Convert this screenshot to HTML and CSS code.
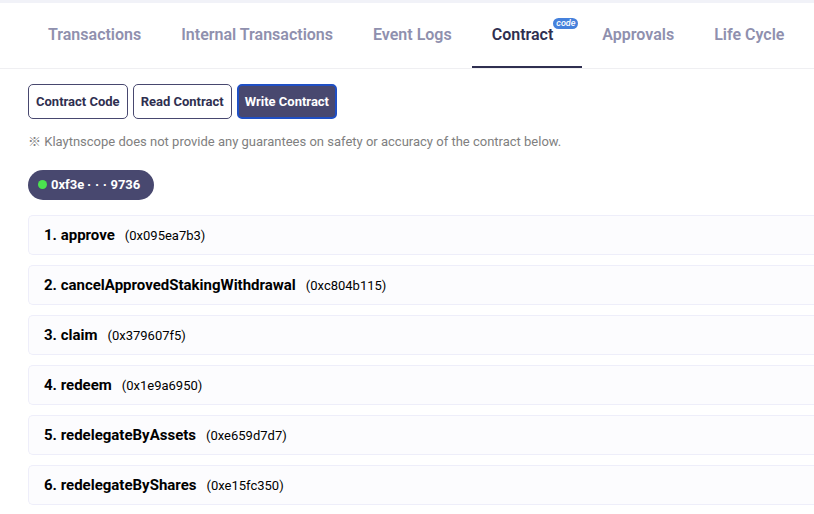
FILE: index.html
```html
<!DOCTYPE html>
<html lang="en">
<head>
<meta charset="utf-8">
<meta name="viewport" content="width=device-width, initial-scale=1">
<title>Contract</title>
<link rel="stylesheet" href="styles.css">
</head>
<body>
<nav class="tabs" aria-label="Account sections">
  <a class="tab" href="#transactions">Transactions</a>
  <a class="tab" href="#internal">Internal Transactions</a>
  <a class="tab" href="#events">Event Logs</a>
  <a class="tab tab-active" href="#contract" aria-current="page"><span class="tab-label">Contract<span class="badge">code</span></span></a>
  <a class="tab" href="#approvals">Approvals</a>
  <a class="tab" href="#life">Life Cycle</a>
</nav>
<main class="content">
  <div class="modes">
    <button class="mode" type="button">Contract Code</button>
    <button class="mode" type="button">Read Contract</button>
    <button class="mode mode-active" type="button">Write Contract</button>
  </div>
  <p class="notice">※ Klaytnscope does not provide any guarantees on safety or accuracy of the contract below.</p>
  <button class="wallet" type="button"><span class="dot"></span><span class="address">0xf3e<span class="ellipsis">· · ·</span>9736</span></button>
  <ol class="methods">
    <li class="method"><span class="name">1. approve</span><span class="selector">(0x095ea7b3)</span></li>
    <li class="method"><span class="name">2. cancelApprovedStakingWithdrawal</span><span class="selector">(0xc804b115)</span></li>
    <li class="method"><span class="name">3. claim</span><span class="selector">(0x379607f5)</span></li>
    <li class="method"><span class="name">4. redeem</span><span class="selector">(0x1e9a6950)</span></li>
    <li class="method"><span class="name">5. redelegateByAssets</span><span class="selector">(0xe659d7d7)</span></li>
    <li class="method"><span class="name">6. redelegateByShares</span><span class="selector">(0xe15fc350)</span></li>
  </ol>
</main>
</body>
</html>
```
FILE: styles.css
```css
* {
  box-sizing: border-box;
}

body {
  margin: 0;
  border-top: 3px solid #f1f2f8;
  background: #fff;
  color: #000;
  font-family: Roboto, "Noto Sans CJK JP", sans-serif;
  font-size: 13px;
}

.tabs {
  display: flex;
  height: 66px;
  padding-left: 28px;
  border-bottom: 1px solid #efeff2;
  white-space: nowrap;
}

.tab {
  display: flex;
  align-items: center;
  padding: 0 20px 1px;
  color: #8f90ae;
  font-size: 16px;
  font-weight: 600;
  line-height: 20px;
  text-decoration: none;
}

.tab-active {
  padding: 0 29px 0 20px;
  border-bottom: 2px solid #2f2f50;
  color: #2f2f50;
}

.tab-label {
  position: relative;
}

.badge {
  position: absolute;
  left: 100%;
  top: -7px;
  padding: 0 3px;
  border-radius: 6px;
  background: #4581dc;
  color: #fff;
  font-size: 9px;
  font-style: italic;
  font-weight: 500;
  line-height: 11px;
}

.content {
  padding: 15px 0 9px 28px;
  overflow: hidden;
}

.modes {
  display: flex;
  gap: 5px;
}

.mode {
  height: 35px;
  padding: 0 7px;
  border: 1px solid #48486f;
  border-radius: 5px;
  background: #fff;
  color: #2f2f50;
  font: inherit;
  font-weight: 700;
}

.mode-active {
  padding: 0 6px;
  border: 2px solid #1f4fc4;
  background: #48486f;
  color: #fff;
}

.notice {
  margin: 13px 0 18px;
  color: #808080;
  line-height: 20px;
}

.wallet {
  display: flex;
  align-items: center;
  gap: 4px;
  height: 30px;
  padding: 0 14px 2px 10px;
  border: 0;
  border-radius: 15px;
  background: #48486f;
  color: #fff;
  font: inherit;
  font-weight: 700;
}

.ellipsis {
  padding: 0 3px;
  font-family: "Liberation Sans", sans-serif;
}

.dot {
  width: 9px;
  height: 9px;
  border-radius: 50%;
  background: #4be34f;
}

.methods {
  display: grid;
  gap: 10px;
  margin: 15px -1px 0 0;
  padding: 0;
  list-style: none;
}

.method {
  display: flex;
  align-items: baseline;
  gap: 10px;
  height: 40px;
  padding: 9px 15px;
  border: 1px solid #eeeefa;
  border-right: 0;
  border-radius: 5px 0 0 5px;
  background: #fcfcfe;
  line-height: 20px;
}

.name {
  font-size: 15px;
  font-weight: 700;
}
```
